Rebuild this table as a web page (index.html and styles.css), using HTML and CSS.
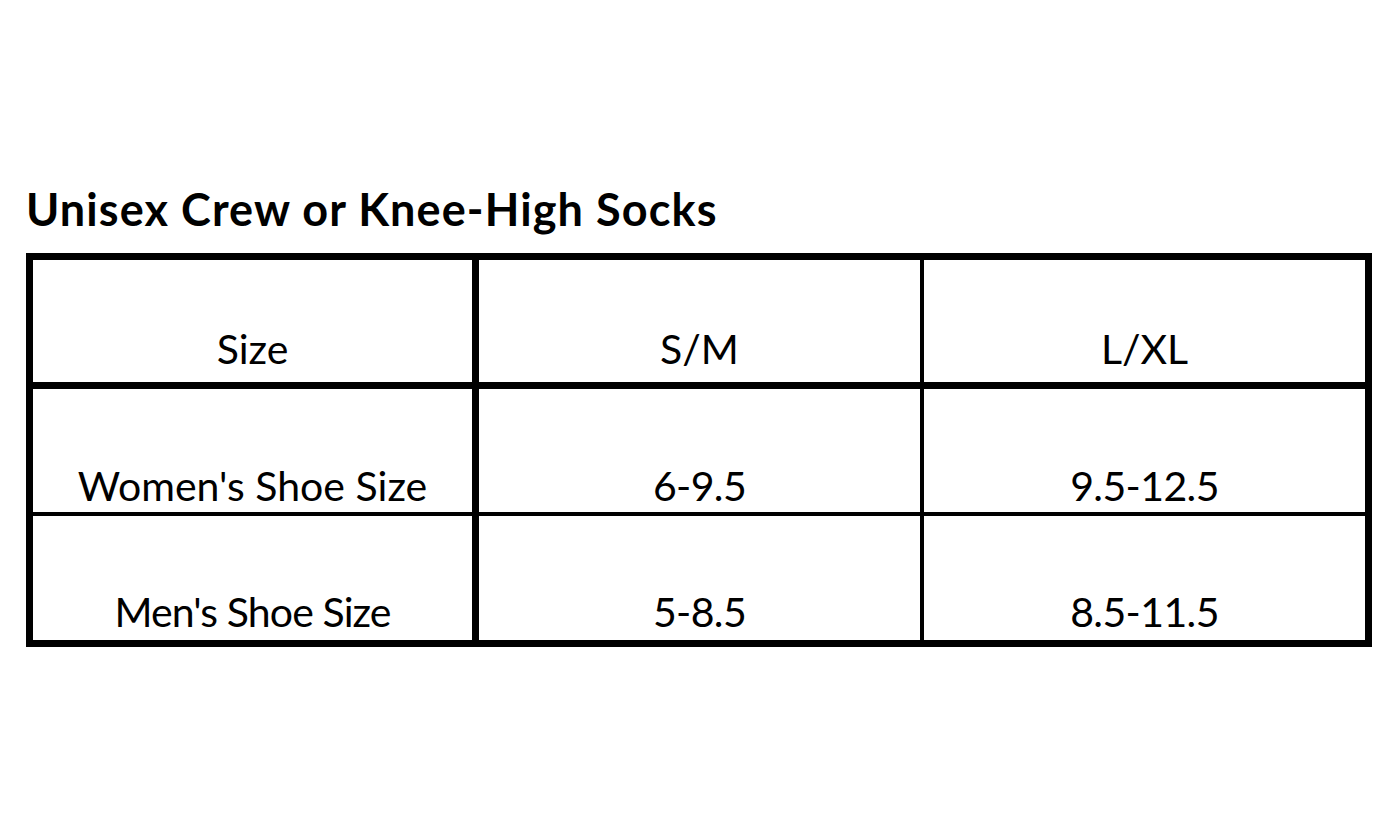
FILE: index.html
```html
<!DOCTYPE html>
<html>
<head>
<meta charset="utf-8">
<link rel="stylesheet" href="styles.css">
</head>
<body>
<div class="page">
  <h1 class="title">Unisex Crew or Knee-High Socks</h1>
  <div class="chart">
    <div class="cell c1 head">Size</div>
    <div class="cell c2 head">S/M</div>
    <div class="cell c3 head">L/XL</div>
    <div class="cell c1 mid">Women's Shoe Size</div>
    <div class="cell c2 mid num">6-9.5</div>
    <div class="cell c3 mid num">9.5-12.5</div>
    <div class="cell c1 last tight">Men's Shoe Size</div>
    <div class="cell c2 last num">5-8.5</div>
    <div class="cell c3 last num">8.5-11.5</div>
  </div>
</div>
</body>
</html>
```

FILE: styles.css
```css
html, body {
  margin: 0;
  padding: 0;
  background: #ffffff;
}
.page {
  width: 1400px;
  height: 840px;
  padding: 181px 0 0 26px;
  box-sizing: border-box;
  font-family: Lato, "Open Sans", sans-serif;
  color: #000;
}
.title {
  margin: 0;
  font-size: 45px;
  font-weight: 700;
  letter-spacing: 1.1px;
  line-height: 56px;
  height: 72px;
}
.chart {
  width: 1346px;
  box-sizing: border-box;
  border: 7px solid #000;
  display: grid;
  grid-template-columns: 446px 445px 1fr;
  grid-template-rows: 129px 127px 124px;
}
.cell {
  box-sizing: border-box;
  display: flex;
  align-items: flex-end;
  justify-content: center;
  font-size: 41px;
  line-height: 1;
}
.num { letter-spacing: -0.6px; }
.tight { letter-spacing: -0.9px; }
.c1 { border-right: 7px solid #000; }
.c2 { border-right: 4px solid #000; }
.head { border-bottom: 7px solid #000; padding-bottom: 13px; }
.mid { border-bottom: 4px solid #000; padding-bottom: 6px; }
.last { padding-bottom: 8px; }
```
